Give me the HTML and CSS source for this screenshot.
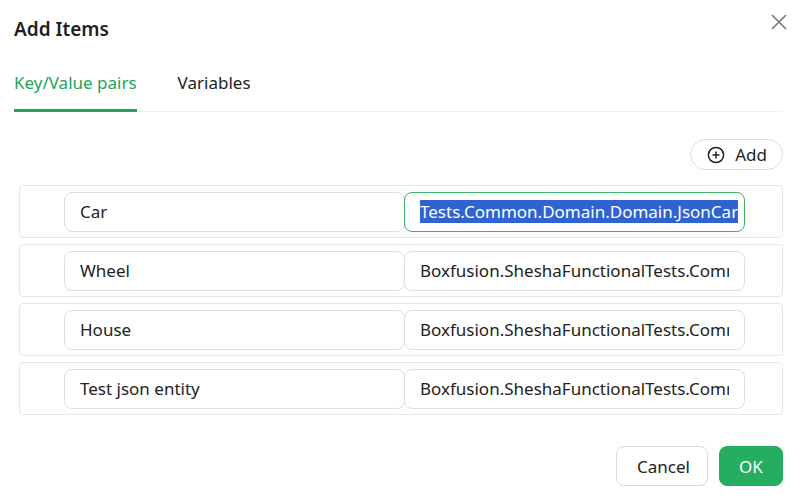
FILE: index.html
```html
<!DOCTYPE html>
<html>
<head>
<meta charset="utf-8">
<link rel="stylesheet" href="styles.css">
</head>
<body>
<div class="dialog">
  <div class="header">
    <div class="title">Add Items</div>
    <button class="close" aria-label="Close">
      <svg width="16" height="16" viewBox="0 0 16 16"><path d="M1 1L15 15M15 1L1 15" stroke="#777" stroke-width="1.6" fill="none"/></svg>
    </button>
  </div>
  <div class="tabs">
    <div class="tab active">Key/Value pairs</div>
    <div class="tab">Variables</div>
  </div>
  <div class="toolbar">
    <button class="add-btn">
      <svg width="18" height="18" viewBox="0 0 18 18"><circle cx="9" cy="9" r="7.6" stroke="#222" stroke-width="1.5" fill="none"/><path d="M9 5.5V12.5M5.5 9H12.5" stroke="#222" stroke-width="1.5"/></svg>
      <span>Add</span>
    </button>
  </div>
  <div class="rows">
    <div class="row">
      <div class="field"><span class="txt">Car</span></div>
      <div class="field value focused"><span class="txt"><span class="sel">Tests.Common.Domain.Domain.JsonCar</span></span></div>
    </div>
    <div class="row">
      <div class="field"><span class="txt">Wheel</span></div>
      <div class="field value"><span class="txt">Boxfusion.SheshaFunctionalTests.Common.Domain.Domain.Wheel</span></div>
    </div>
    <div class="row">
      <div class="field"><span class="txt">House</span></div>
      <div class="field value"><span class="txt">Boxfusion.SheshaFunctionalTests.Common.Domain.Domain.House</span></div>
    </div>
    <div class="row">
      <div class="field"><span class="txt">Test json entity</span></div>
      <div class="field value"><span class="txt">Boxfusion.SheshaFunctionalTests.Common.Domain.Domain.TestJsonEntity</span></div>
    </div>
  </div>
  <div class="footer">
    <button class="btn">Cancel</button>
    <button class="btn primary">OK</button>
  </div>
</div>
</body>
</html>
```
FILE: styles.css
```css
* { box-sizing: border-box; }
html, body { margin: 0; padding: 0; background: #fff; }
body {
  font-family: "Noto Sans", "Open Sans", sans-serif;
  color: #222;
  font-size: 16px;
}
.dialog {
  width: 800px;
  height: 497px;
  padding: 0 17px 0 14px;
  display: flex;
  flex-direction: column;
}
.header {
  display: flex;
  justify-content: space-between;
  align-items: flex-start;
  height: 58px;
}
.title {
  font-size: 19px;
  font-weight: 600;
  margin-top: 16px;
  color: #1f1f1f;
}
.close {
  border: none;
  background: none;
  padding: 0;
  margin-top: 14px;
  margin-right: -4px;
  width: 16px;
  height: 16px;
  cursor: pointer;
}
.tabs {
  display: flex;
  gap: 41px;
  border-bottom: 1px solid #efefef;
  height: 54px;
}
.tab {
  font-size: 17px;
  color: #222;
  padding-top: 13px;
  height: 53px;
}
.tab.active {
  color: #23a45a;
  border-bottom: 3px solid #23a45a;
  height: 54px;
  margin-bottom: -1px;
}
.toolbar {
  display: flex;
  justify-content: flex-end;
  margin-top: 27px;
}
.add-btn {
  display: flex;
  align-items: center;
  gap: 10px;
  height: 31px;
  padding: 0 15px 0 16px;
  border: 1px solid #dcdcdc;
  border-radius: 16px;
  background: #fff;
  font-family: inherit;
  font-size: 17px;
  color: #222;
}
.rows {
  display: flex;
  flex-direction: column;
  gap: 6px;
  margin-top: 15px;
  margin-left: 5px;
}
.row {
  height: 53px;
  border: 1px solid #e6e6e6;
  border-radius: 4px;
  display: flex;
  align-items: center;
  padding-left: 44px;
}
.field {
  width: 341px;
  height: 40px;
  border: 1px solid #dedede;
  border-radius: 8px;
  padding: 0 15px;
  display: flex;
  align-items: center;
  font-size: 17px;
  color: #222;
}
.txt {
  display: block;
  min-width: 0;
  flex: 1;
  white-space: nowrap;
  overflow: hidden;
}
.field.value {
  width: 341px;
  margin-left: -1px;
}
.field.focused {
  border-color: #37b36b;
  padding-right: 2px;
}
.sel {
  background: #2f63d1;
  color: #fff;
  line-height: 22px;
}
.footer {
  display: flex;
  justify-content: flex-end;
  gap: 11px;
  margin-top: 31px;
}
.btn {
  height: 40px;
  border: 1px solid #d9d9d9;
  border-radius: 8px;
  background: #fff;
  font-family: inherit;
  font-size: 17px;
  color: #222;
  padding: 0 20px;
  width: 92px;
}
.btn.primary {
  background: #25ad60;
  border-color: #25ad60;
  color: #fff;
  width: 64px;
  padding: 0;
}
```
